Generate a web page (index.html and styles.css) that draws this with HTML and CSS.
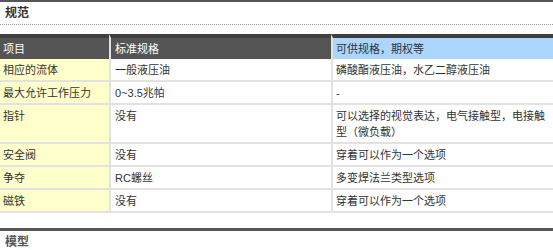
FILE: index.html
```html
<!DOCTYPE html>
<html lang="zh-CN">
<head>
<meta charset="utf-8">
<link rel="stylesheet" href="styles.css">
</head>
<body>
<section class="block">
  <h2 class="block-title">规范</h2>
  <table class="spec">
    <colgroup>
      <col class="c1">
      <col class="c2">
      <col class="c3">
    </colgroup>
    <thead>
      <tr>
        <th>项目</th>
        <th>标准规格</th>
        <th class="opt">可供规格，期权等</th>
      </tr>
    </thead>
    <tbody>
      <tr><td>相应的流体</td><td>一般液压油</td><td>磷酸酯液压油，水乙二醇液压油</td></tr>
      <tr><td>最大允许工作压力</td><td>0~3.5兆帕</td><td>-</td></tr>
      <tr><td>指针</td><td>没有</td><td>可以选择的视觉表达，电气接触型，电接触型（微负载）</td></tr>
      <tr><td>安全阀</td><td>没有</td><td>穿着可以作为一个选项</td></tr>
      <tr><td>争夺</td><td>RC螺丝</td><td>多变焊法兰类型选项</td></tr>
      <tr><td>磁铁</td><td>没有</td><td>穿着可以作为一个选项</td></tr>
    </tbody>
  </table>
</section>
<section class="block next">
  <h2 class="block-title plain">模型</h2>
</section>
</body>
</html>
```
FILE: styles.css
```css
html, body {
  margin: 0;
  padding: 0;
  background: #fff;
}
body {
  font-family: "Liberation Sans", "Noto Sans CJK SC", sans-serif;
  font-size: 11px;
  color: #333;
}
.block {
  border-top: 2px solid #555;
}
.block-title {
  margin: 0;
  padding-left: 5px;
  height: 22px;
  line-height: 22px;
  font-size: 12px;
  font-weight: bold;
  color: #333;
  border-bottom: 1px dotted #999;
}
.block-title.plain {
  border-bottom: none;
  color: #555;
}
.next {
  margin-top: 15px;
  border-top: 3px solid #555;
}
.spec {
  margin-top: 9px;
  width: 100%;
  table-layout: fixed;
  border-collapse: separate;
  border-spacing: 0;
}
.c1 { width: 109px; }
.c2 { width: 222px; }
.spec th,
.spec td {
  padding: 3px 3px 2px 4px;
  line-height: 16px;
  text-align: left;
  vertical-align: top;
  font-weight: normal;
}
.spec th {
  background: #555;
  color: #fff;
  border-top: 4px solid #3f3f3f;
}
.spec th + th,
.spec td + td {
  border-left: 2px solid #e2e2e2;
}
.spec th:first-child,
.spec td:first-child {
  padding-left: 3px;
}
.spec th.opt {
  background: #acd5ff;
  color: #333;
  padding-left: 3px;
}
.spec td {
  border-bottom: 2px solid #e2e2e2;
}
.spec td:first-child {
  background: #ffffcc;
}
.spec td:last-child {
  padding-left: 3px;
}
```
